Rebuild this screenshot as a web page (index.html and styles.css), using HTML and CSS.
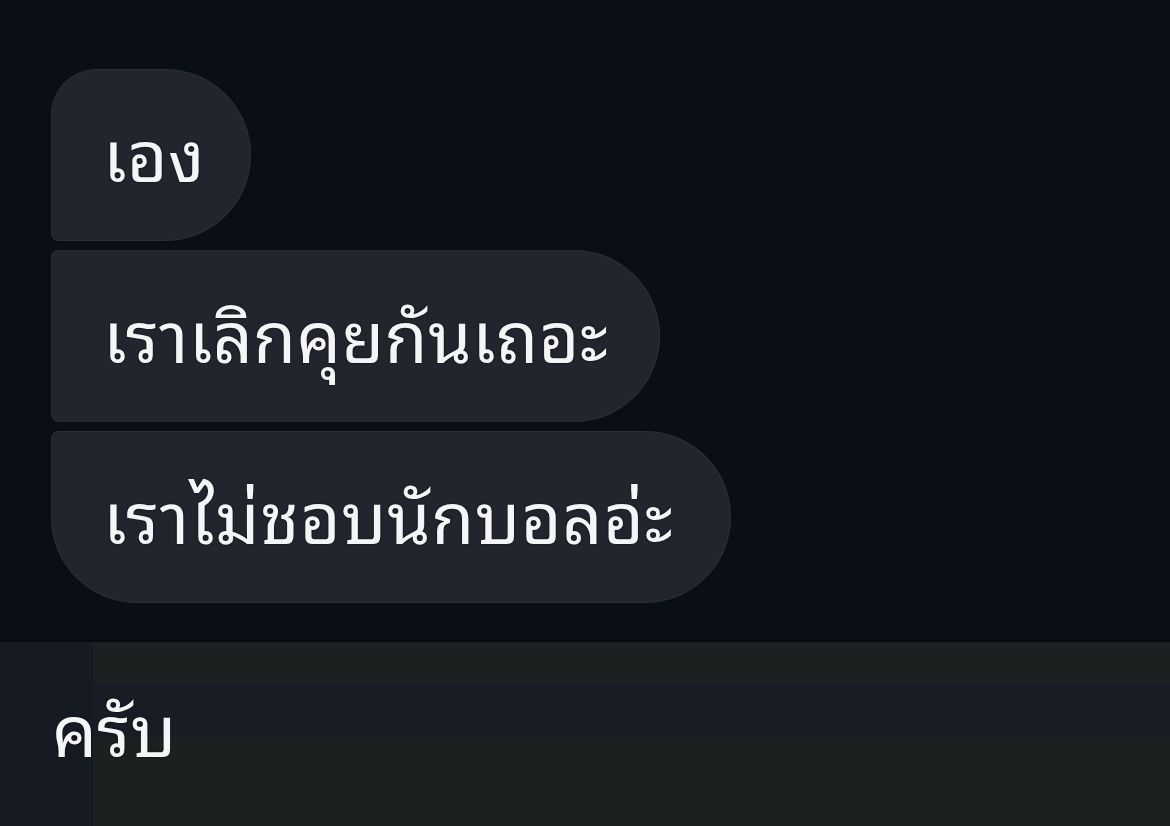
FILE: index.html
```html
<!DOCTYPE html>
<html lang="th">
<head>
<meta charset="utf-8">
<title>แชท</title>
<link rel="stylesheet" href="styles.css">
</head>
<body>
  <main class="chat">
    <section class="thread">
      <div class="bubble bubble-first">เอง</div>
      <div class="bubble bubble-mid">เราเลิกคุยกันเถอะ</div>
      <div class="bubble bubble-last">เราไม่ชอบนักบอลอ่ะ</div>
    </section>
    <footer class="composer">
      <div class="composer-rail"></div>
      <div class="composer-field">
        <div class="composer-band"></div>
      </div>
      <div class="composer-text">ครับ</div>
    </footer>
  </main>
</body>
</html>
```

FILE: styles.css
```css
html, body {
  margin: 0;
  padding: 0;
  height: 100%;
  background: #0a0e17;
}

body {
  font-family: "Noto Sans Thai Looped", "Noto Sans Thai", "Noto Sans", sans-serif;
  color: #f4f5f7;
}

.chat {
  width: 1170px;
  height: 826px;
  display: flex;
  flex-direction: column;
  overflow: hidden;
}

.thread {
  height: 640px;
  box-sizing: border-box;
  padding: 69px 0 0 51px;
  display: flex;
  flex-direction: column;
  align-items: flex-start;
  gap: 9px;
}

.bubble {
  box-sizing: border-box;
  height: 172px;
  padding: 0 52px 8px 52px;
  display: flex;
  align-items: center;
  background: #22252d;
  box-shadow: inset 0 0 0 1px #2a2d35;
  font-size: 70px;
  line-height: 1;
  letter-spacing: 0.3px;
  text-shadow: 0 0 2px rgba(0, 0, 0, 0.85);
}

.bubble-first {
  padding-right: 46px;
  border-radius: 46px 86px 86px 8px;
}

.bubble-mid {
  border-radius: 8px 86px 86px 8px;
}

.bubble-last {
  padding-right: 58px;
  letter-spacing: 0.6px;
  border-radius: 8px 86px 86px 86px;
}

.composer {
  position: relative;
  flex: 1;
  display: flex;
  background: #1c2021;
  border-top: 2px solid #070a11;
}

.composer-rail {
  width: 93px;
  background: #161a23;
}

.composer-field {
  flex: 1;
  display: flex;
  flex-direction: column;
  padding-top: 40px;
}

.composer-band {
  height: 55px;
  background: #181c24;
}

/* typed draft sits over the rail and field */
.composer-text {
  position: absolute;
  left: 52px;
  top: 48px;
  font-size: 71px;
  line-height: 1;
  text-shadow: 0 0 2px rgba(0, 0, 0, 0.85);
}
```
